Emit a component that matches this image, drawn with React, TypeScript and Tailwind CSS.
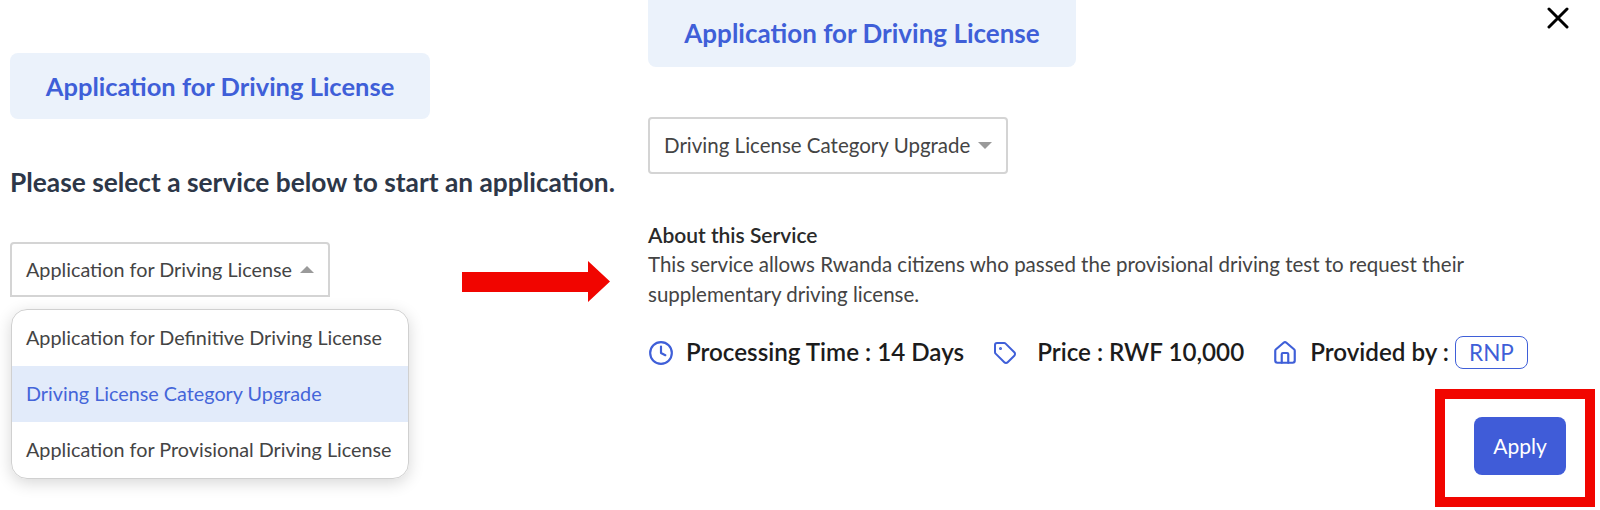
function Caret({ up }: { up?: boolean }) {
  return (
    <svg width="14" height="7" viewBox="0 0 14 7" className="shrink-0">
      <polygon points={up ? "7,0 14,7 0,7" : "0,0 14,0 7,7"} fill="#9a9a9a" />
    </svg>
  );
}

function Banner({ className }: { className: string }) {
  return (
    <div className={`flex items-center justify-center rounded-lg bg-[#ebf2fb] font-bold text-[#3f5fd8] ${className}`}>
      Application for Driving License
    </div>
  );
}

function RedArrow() {
  return (
    <svg width="148" height="41" viewBox="0 0 148 41" className="shrink-0">
      <polygon points="0,11 126,11 126,0 148,20.5 126,41 126,31 0,31" fill="#f10500" />
    </svg>
  );
}

const options = [
  "Application for Definitive Driving License",
  "Driving License Category Upgrade",
  "Application for Provisional Driving License",
];

export default function App() {
  return (
    <div className="relative flex h-[510px] w-[1600px] overflow-hidden bg-white font-['Lato',sans-serif] text-[#444]">
      {/* left step */}
      <div className="w-[640px] shrink-0 pl-[10px] pt-[53px]">
        <Banner className="h-[66px] w-[420px] text-[25.5px]" />
        <h2 className="mt-[48px] text-[26.3px] leading-[30px] font-bold text-[#2d3748] whitespace-nowrap">
          Please select a service below to start an application.
        </h2>
        <div className="mt-[45px] flex h-[55px] items-start">
          <div className="flex h-[55px] w-[320px] items-center gap-2 rounded-t border-2 border-[#d4d4d4] pl-[14px] text-[19.8px] whitespace-nowrap">
            Application for Driving License
            <Caret up />
          </div>
          <div className="ml-[132px] mt-[19px]">
            <RedArrow />
          </div>
        </div>
        <div className="ml-[1px] mt-[12px] w-[398px] overflow-hidden rounded-2xl border border-[#d0d0d0] text-[19.8px] shadow-[0_4px_16px_rgba(0,0,0,0.16)]">
          {options.map((o, i) => (
            <div
              key={o}
              className={`flex h-[56px] items-center pl-[14px] whitespace-nowrap ${i === 1 ? "bg-[#e2ebfa] text-[#4465d9]" : ""}`}
            >
              {o}
            </div>
          ))}
        </div>
      </div>

      {/* right step */}
      <div className="flex-1 pl-2">
        <Banner className="h-[67px] w-[428px] rounded-t-none text-[26px]" />
        <div className="mt-[50px] flex h-[57px] w-[360px] items-center gap-2 rounded border-2 border-[#d4d4d4] pl-[14px] text-[20.5px] whitespace-nowrap">
          Driving License Category Upgrade
          <Caret />
        </div>
        <p className="mt-[46px] text-[21px] leading-[29px] font-semibold text-[#2a2a2a]">About this Service</p>
        <p className="w-[840px] text-[20.5px] leading-[30px]">
          This service allows Rwanda citizens who passed the provisional driving test to request their supplementary
          driving license.
        </p>
        <div className="mt-[27px] flex h-[33px] items-center text-[24.2px] font-semibold text-[#1c1c1c] whitespace-nowrap">
          <svg width="26" height="26" viewBox="0 0 24 24" fill="none" stroke="#3f5fd8" strokeWidth="2" strokeLinecap="round" strokeLinejoin="round" className="shrink-0">
            <circle cx="12" cy="12" r="10" />
            <path d="M12 6v6l4 2" />
          </svg>
          <span className="ml-[12px]">Processing Time : 14 Days</span>
          <svg width="24" height="24" viewBox="0 0 24 24" fill="none" stroke="#3f5fd8" strokeWidth="2" strokeLinecap="round" strokeLinejoin="round" className="ml-[29px] shrink-0">
            <path d="M12.6 2.6A2 2 0 0 0 11.2 2H4a2 2 0 0 0-2 2v7.2a2 2 0 0 0 .6 1.4l8.7 8.7a2.4 2.4 0 0 0 3.4 0l6.6-6.6a2.4 2.4 0 0 0 0-3.4z" />
            <circle cx="7.5" cy="7.5" r=".5" fill="#3f5fd8" />
          </svg>
          <span className="ml-[20px]">Price : RWF 10,000</span>
          <svg width="26" height="26" viewBox="0 0 24 24" fill="none" stroke="#3f5fd8" strokeWidth="2" strokeLinecap="round" strokeLinejoin="round" className="ml-[28px] shrink-0">
            <path d="M15 21v-8a1 1 0 0 0-1-1h-4a1 1 0 0 0-1 1v8" />
            <path d="M3 10a2 2 0 0 1 .7-1.5l7-6a2 2 0 0 1 2.6 0l7 6A2 2 0 0 1 21 10v9a2 2 0 0 1-2 2H5a2 2 0 0 1-2-2z" />
          </svg>
          <span className="ml-[12px]">Provided by :</span>
          <span className="ml-[6px] flex h-[33px] w-[73px] items-center justify-center rounded-lg border border-[#3f5fd8] text-[22.5px] font-normal text-[#3f5fd8]">
            RNP
          </span>
        </div>
        <div className="mt-[20px] flex justify-end pr-[5px]">
          <div className="flex h-[118px] w-[160px] items-start justify-end border-[10px] border-[#f10500] pr-[19px] pt-[18px]">
            <button className="h-[58px] w-[92px] rounded-lg bg-[#405cd8] text-[21px] text-white">Apply</button>
          </div>
        </div>
      </div>

      {/* close */}
      <svg width="22" height="22" viewBox="0 0 22 22" className="absolute left-[1547px] top-[7px]">
        <path d="M2 2 20 20M20 2 2 20" stroke="#000" strokeWidth="3" strokeLinecap="round" />
      </svg>
    </div>
  );
}
